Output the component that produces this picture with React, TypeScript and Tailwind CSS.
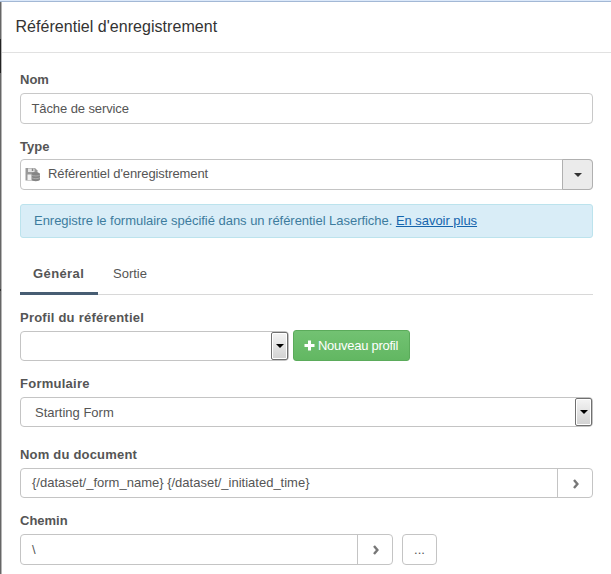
import React from "react";

function Label({ children, className = "" }: { children: React.ReactNode; className?: string }) {
  return <div className={`h-5 whitespace-nowrap text-[13px] leading-5 font-bold text-[#555] ${className}`}>{children}</div>;
}

function Caret({ className = "" }: { className?: string }) {
  return (
    <svg width="8" height="4" viewBox="0 0 8 4" className={className} fill="currentColor">
      <path d="M0 0H8L4 4Z" />
    </svg>
  );
}

function Chevron() {
  return (
    <svg width="7" height="10" viewBox="0 0 7 10" fill="none" stroke="#777" strokeWidth="2.4">
      <path d="M1 1L4.4 5L1 9" />
    </svg>
  );
}

function SelectArrow() {
  return (
    <span className="flex w-[17px] shrink-0 items-center justify-center rounded-[2px] border border-[#707070] bg-linear-to-b from-[#f4f4f4] to-[#d2d2d2] text-black ring-1 ring-white ring-inset">
      <Caret />
    </span>
  );
}

function SaveIcon() {
  return (
    <svg width="16" height="15" viewBox="0 0 16 15" className="shrink-0">
      <path d="M0.5 1H10L12.5 3.5V13.5H0.5Z" fill="#999" />
      <path d="M3 1.5H9.5V5H3Z" fill="#e4e4e4" />
      <path d="M6.8 1.5H8.3V4H6.8Z" fill="#888" />
      <path d="M2.5 7.5H8V13H2.5Z" fill="#f2f2f2" />
      <path d="M6.5 7C6.5 4.8 15 4.8 15 7V12.5C15 14.8 6.5 14.8 6.5 12.5Z" fill="#858585" />
      <path d="M6.5 8C8.5 9.3 13.5 9.3 15 8M6.5 10.7C8.5 12 13.5 12 15 10.7" stroke="#bbb" strokeWidth="0.7" fill="none" />
    </svg>
  );
}

export default function App() {
  return (
    <div className="flex h-[574px] w-[611px] flex-col overflow-hidden bg-white font-['Liberation_Sans',Arial,sans-serif] text-[13px] text-[#555]">
      <div className="h-0.5 shrink-0 border-b border-[#a3b8d5] bg-[#dce9fa]" />
      <div className="flex min-h-0 flex-1">
        <div className="flex w-0.5 shrink-0 flex-col border-r border-[#b5b5b5] bg-[#666]">
          <div className="mt-[37px] h-[34px] bg-[#222]" />
          <div className="mt-[216px] h-0.5 bg-[#333]" />
        </div>
        <div className="min-w-0 flex-1">
          <header className="h-[51px] border-b border-[#e1e1e1] pl-[13.5px] text-base leading-[49px] tracking-[0.04px] whitespace-nowrap text-[#333]">
            <span>Référentiel d'enregistrement</span>
          </header>
          <main className="w-[591px] pl-[18px]">
            <Label className="mt-[17px]">Nom</Label>
            <div className="mt-[3px] h-[31px] rounded border border-[#c8c8c8] pl-[10.5px] leading-[29px] tracking-[-0.1px]">Tâche de service</div>

            <Label className="mt-[13px]">Type</Label>
            <div className="mt-[2px] flex h-[31px] rounded border border-[#c4c4c4]">
              <div className="flex flex-1 items-center pl-1">
                <SaveIcon />
                <span className="-mt-0.5 ml-[7px] leading-[27px] tracking-[-0.1px]">Référentiel d'enregistrement</span>
              </div>
              <div className="-my-px -mr-px flex w-[31px] items-center justify-center rounded-r border border-[#b0b0b0] bg-[#ebebeb] text-[#333]">
                <Caret />
              </div>
            </div>

            <div className="mt-3.5 h-[34px] rounded-[3px] border border-[#bce3ed] bg-[#d9edf7] pl-[13px] leading-8 tracking-[-0.035px] whitespace-nowrap text-[#3d7c9e]">
              Enregistre le formulaire spécifié dans un référentiel Laserfiche. <a className="text-[#1565ad] underline">En savoir plus</a>
            </div>

            <nav className="mt-[15px] flex h-[42px] border-b border-[#d8d8d8] leading-[41px]">
              <div className="h-[42px] w-[78px] border-b-3 border-[#475d73] pl-[13px] font-bold tracking-[0.4px]">Général</div>
              <div className="pl-[15px]">Sortie</div>
            </nav>

            <Label className="mt-[13px] tracking-[0.23px]">Profil du référentiel</Label>
            <div className="mt-[2px] flex h-[31px] items-end">
              <div className="flex h-[30px] w-[269px] justify-end rounded border border-[#c4c4c4]">
                <SelectArrow />
              </div>
              <button className="ml-1 flex h-[31px] w-[117px] items-center rounded-[3px] border border-[#5bab5b] bg-linear-to-b from-[#72c272] to-[#62b762] pl-2.5 whitespace-nowrap text-white">
                <svg width="11" height="11" viewBox="0 0 11 11" className="mr-[3px] shrink-0" fill="white">
                  <path d="M4 0.5h3v3.5h3.5v3h-3.5v3.5h-3v-3.5h-3.5v-3h3.5z" />
                </svg>
                <span className="tracking-[-0.27px]">Nouveau profil</span>
              </button>
            </div>

            <Label className="mt-[13px] tracking-[0.25px]">Formulaire</Label>
            <div className="mt-[3px] flex h-[30px] rounded border border-[#c4c4c4]">
              <span className="flex-1 pl-3.5 leading-[29px]">Starting Form</span>
              <SelectArrow />
            </div>

            <Label className="mt-[18px] tracking-[0.2px]">Nom du document</Label>
            <div className="mt-[3px] flex h-[30px] rounded border border-[#c4c4c4]">
              <span className="flex-1 pl-[11px] leading-7">{"{/dataset/_form_name} {/dataset/_initiated_time}"}</span>
              <span className="flex w-[35px] items-center justify-center border-l border-[#c4c4c4] pt-0.5 pl-0.5">
                <Chevron />
              </span>
            </div>

            <Label className="mt-[13px]">Chemin</Label>
            <div className="mt-[3px] flex h-[31px]">
              <div className="flex w-[373px] rounded border border-[#c4c4c4]">
                <span className="flex-1 pl-[11px] leading-[29px]">\</span>
                <span className="flex w-[35px] items-center justify-center border-l border-[#c4c4c4] pt-px pl-0.5">
                  <Chevron />
                </span>
              </div>
              <div className="ml-[9px] w-[35px] rounded border border-[#c4c4c4] text-center leading-[29px]">...</div>
            </div>
          </main>
        </div>
      </div>
    </div>
  );
}
